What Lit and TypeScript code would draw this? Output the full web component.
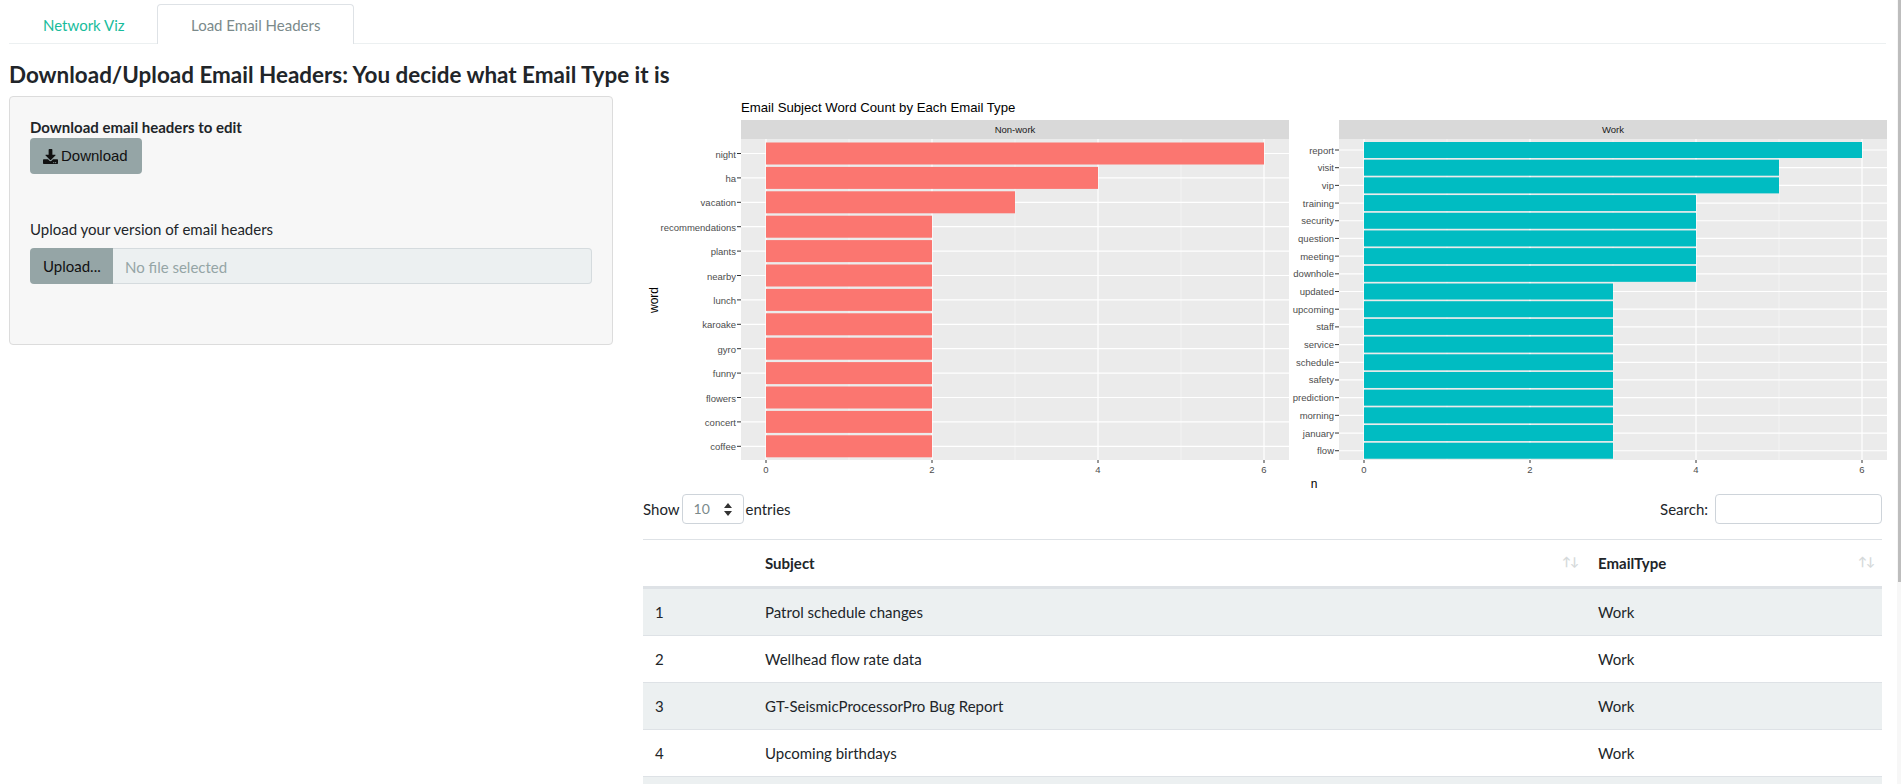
import { LitElement, html, css, svg } from 'lit';
import { customElement } from 'lit/decorators.js';

interface Facet {
  name: string;
  left: number; // panel left edge, local to the plot svg
  firstY: number;
  stepY: number;
  barH: number;
  labelDy: number;
  color: string;
  rows: [string, number][];
}

const PANEL_W = 548;
const PANEL_TOP = 43;
const PANEL_BOTTOM = 364;
const UNIT = 83;
const ZERO_OFFSET = 25;

const rowsOf = (groups: [number, string[]][]): [string, number][] =>
  groups.flatMap(([n, words]) => words.map((w) => [w, n] as [string, number]));

const FACETS: Facet[] = [
  {
    name: 'Non-work',
    left: 98,
    firstY: 57.5,
    stepY: 24.4,
    barH: 22,
    labelDy: 4,
    color: '#fb7670',
    rows: rowsOf([
      [6, ['night']],
      [4, ['ha']],
      [3, ['vacation']],
      [2, ['recommendations', 'plants', 'nearby', 'lunch', 'karoake', 'gyro', 'funny', 'flowers', 'concert', 'coffee']],
    ]),
  },
  {
    name: 'Work',
    left: 696,
    firstY: 54,
    stepY: 17.69,
    barH: 16,
    labelDy: 3.5,
    color: '#00bcc2',
    rows: rowsOf([
      [6, ['report']],
      [5, ['visit', 'vip']],
      [4, ['training', 'security', 'question', 'meeting', 'downhole']],
      [3, ['updated', 'upcoming', 'staff', 'service', 'schedule', 'safety', 'prediction', 'morning', 'january', 'flow']],
    ]),
  },
];

const TABLE_ROWS = [
  ['1', 'Patrol schedule changes', 'Work'],
  ['2', 'Wellhead flow rate data', 'Work'],
  ['3', 'GT-SeismicProcessorPro Bug Report', 'Work'],
  ['4', 'Upcoming birthdays', 'Work'],
  ['', '', ''],
];

const DOWNLOAD_ICON =
  'M216 0h80c13.3 0 24 10.7 24 24v168h87.7c17.8 0 26.7 21.5 14.1 34.1L269.7 378.3c-7.5 7.5-19.8 7.5-27.3 0L90.1 226.1c-12.6-12.6-3.7-34.1 14.1-34.1H192V24c0-13.3 10.7-24 24-24zm296 376v112c0 13.3-10.7 24-24 24H24c-13.3 0-24-10.7-24-24V376c0-13.3 10.7-24 24-24h146.7l49 49c20.1 20.1 52.5 20.1 72.6 0l49-49H488c13.3 0 24 10.7 24 24zm-124 88c0-11-9-20-20-20s-20 9-20 20 9 20 20 20 20-9 20-20zm64 0c0-11-9-20-20-20s-20 9-20 20 9 20 20 20 20-9 20-20z';

@customElement('app-root')
export class AppRoot extends LitElement {
  static styles = css`
    :host {
      display: block;
      position: relative;
      height: 784px;
      overflow: hidden;
      background: #fff;
      color: #212529;
      font-family: Lato, sans-serif;
      font-size: 15px;
      line-height: 22px;
    }
    .tabs {
      display: flex;
      margin: 0 15px 0 9px;
      padding-top: 4px;
      height: 39px;
      border-bottom: 1px solid #ecf0f1;
    }
    .tab {
      padding: 9px 33px;
      color: #18bc9c;
      border: 1px solid transparent;
      border-bottom: none;
      border-radius: 4px 4px 0 0;
      white-space: nowrap;
    }
    .tab.first {
      width: 148px;
      box-sizing: border-box;
    }
    .tab.active {
      color: #7b8a8b;
      background: #fff;
      border-color: #dee2e6;
      height: 40px;
      box-sizing: border-box;
    }
    h3 {
      margin: 16px 0 7px 9px;
      font-size: 22.45px;
      line-height: 29px;
      font-weight: 700;
    }
    .main {
      display: flex;
      align-items: flex-start;
    }
    .side {
      box-sizing: border-box;
      flex: none;
      width: 604px;
      height: 249px;
      margin: 0 30px 0 9px;
      padding: 19px 20px 0;
      background: #f7f7f7;
      border: 1px solid #dcdcdc;
      border-radius: 4px;
    }
    .strong {
      font-weight: 700;
    }
    .btn {
      display: flex;
      align-items: center;
      gap: 3px;
      box-sizing: border-box;
      width: 112px;
      height: 36px;
      padding-left: 13px;
      background: #95a5a6;
      color: #111;
      border-radius: 4px;
      font-family: 'Liberation Sans', sans-serif;
      font-size: 15px;
    }
    .btn svg {
      width: 15px;
      height: 15px;
      fill: #111;
    }
    .upload-label {
      margin: 44px 0 8px;
    }
    .file {
      display: flex;
      height: 36px;
    }
    .file-btn {
      flex: none;
      box-sizing: border-box;
      width: 83px;
      padding: 7px 0 0 13px;
      background: #95a5a6;
      color: #111;
      border-radius: 4px 0 0 4px;
    }
    .file-name {
      flex: 1;
      padding: 7px 0 0 12px;
      background: #ecf0f1;
      color: #95a5a6;
      border: 1px solid #d5dbde;
      border-left: none;
      border-radius: 0 4px 4px 0;
    }
    .content {
      flex: 1;
      min-width: 0;
    }
    .plot {
      display: block;
      width: 1258px;
      height: 398px;
    }
    .plot text {
      font-family: 'Liberation Sans', sans-serif;
    }
    .plot .tick {
      font-size: 9.5px;
      fill: #4d4d4d;
    }
    .plot .strip {
      font-size: 9.5px;
      fill: #1a1a1a;
    }
    .plot .title {
      font-size: 13.2px;
      fill: #000;
    }
    .plot .axis {
      font-size: 12px;
      fill: #000;
    }
    .controls {
      display: flex;
      justify-content: space-between;
      align-items: center;
      box-sizing: border-box;
      width: 1239px;
      height: 30px;
    }
    .length,
    .search {
      display: flex;
      align-items: center;
      gap: 2px;
    }
    .select {
      display: flex;
      align-items: center;
      justify-content: space-between;
      box-sizing: border-box;
      width: 62px;
      height: 30px;
      padding: 0 11px;
      border: 1px solid #ced4da;
      border-radius: 4px;
      color: #7b8a8b;
      font-size: 14px;
    }
    .select svg {
      width: 8px;
      height: 13px;
      fill: #333;
    }
    .search {
      gap: 7px;
    }
    .search-box {
      box-sizing: border-box;
      width: 167px;
      height: 30px;
      border: 1px solid #ced4da;
      border-radius: 4px;
    }
    table {
      table-layout: fixed;
      width: 1239px;
      margin-top: 15px;
      border-collapse: collapse;
      border-top: 1px solid #dee2e6;
    }
    .col-index {
      width: 110px;
    }
    .col-subject {
      width: 833px;
    }
    th {
      position: relative;
      height: 46px;
      padding: 0 12px;
      text-align: left;
      font-weight: 700;
      border-bottom: 3px solid #dee2e6;
    }
    td {
      height: 46px;
      padding: 0 12px;
      border-bottom: 1px solid #dee2e6;
    }
    tr.odd td {
      background: #ecf0f1;
    }
    .sort {
      position: absolute;
      right: 8px;
      top: 11px;
      color: #d5d9da;
      font-size: 12px;
      letter-spacing: -1px;
    }
    .scroll-track {
      position: absolute;
      top: 0;
      bottom: 0;
      right: 0;
      width: 4px;
      background: #f7f7f7;
    }
    .scroll-thumb {
      height: 582px;
      margin-left: 1px;
      width: 3px;
      background: #bdbdbd;
    }
  `;

  private renderFacet(f: Facet) {
    const x0 = f.left + ZERO_OFFSET;
    const right = f.left + PANEL_W;
    const ticks = [0, 2, 4, 6];
    const minors = [1, 3, 5];
    return svg`
      <rect x=${f.left} y="24" width=${PANEL_W} height="19" fill="#d9d9d9"></rect>
      <text class="strip" x=${f.left + PANEL_W / 2} y="37" text-anchor="middle">${f.name}</text>
      <rect x=${f.left} y=${PANEL_TOP} width=${PANEL_W} height=${PANEL_BOTTOM - PANEL_TOP} fill="#ebebeb"></rect>
      ${minors.map((m) => svg`
        <line x1=${x0 + m * UNIT} x2=${x0 + m * UNIT} y1=${PANEL_TOP} y2=${PANEL_BOTTOM} stroke="#f6f6f6" stroke-width="0.7"></line>
      `)}
      ${ticks.map((t) => svg`
        <line x1=${x0 + t * UNIT} x2=${x0 + t * UNIT} y1=${PANEL_TOP} y2=${PANEL_BOTTOM} stroke="#fff" stroke-width="1.2"></line>
        <line x1=${x0 + t * UNIT} x2=${x0 + t * UNIT} y1=${PANEL_BOTTOM} y2=${PANEL_BOTTOM + 3} stroke="#333"></line>
        <text class="tick" x=${x0 + t * UNIT} y=${PANEL_BOTTOM + 13} text-anchor="middle">${t}</text>
      `)}
      ${f.rows.map(([word, n], i) => {
        const cy = f.firstY + i * f.stepY;
        return svg`
          <line x1=${f.left} x2=${right} y1=${cy} y2=${cy} stroke="#fff" stroke-width="1.2"></line>
          <rect x=${x0} y=${cy - f.barH / 2} width=${n * UNIT} height=${f.barH} fill=${f.color}></rect>
          <line x1=${f.left - 4} x2=${f.left} y1=${cy} y2=${cy} stroke="#333"></line>
          <text class="tick" x=${f.left - 5} y=${cy + f.labelDy} text-anchor="end">${word}</text>
        `;
      })}
    `;
  }

  private renderPlot() {
    return html`
      <svg class="plot" viewBox="0 0 1258 398">
        <text class="title" x="98" y="16">Email Subject Word Count by Each Email Type</text>
        ${FACETS.map((f) => this.renderFacet(f))}
        <text class="axis" transform="translate(15 204) rotate(-90)" text-anchor="middle">word</text>
        <text class="axis" x="671" y="392" text-anchor="middle">n</text>
      </svg>
    `;
  }

  render() {
    return html`
      <div class="tabs">
        <div class="tab first">Network Viz</div>
        <div class="tab active">Load Email Headers</div>
      </div>
      <h3>Download/Upload Email Headers: You decide what Email Type it is</h3>
      <div class="main">
        <div class="side">
          <div class="strong">Download email headers to edit</div>
          <div class="btn">
            <svg viewBox="0 0 512 512"><path d=${DOWNLOAD_ICON}></path></svg>
            <span>Download</span>
          </div>
          <div class="upload-label">Upload your version of email headers</div>
          <div class="file">
            <div class="file-btn">Upload...</div>
            <div class="file-name">No file selected</div>
          </div>
        </div>
        <div class="content">
          ${this.renderPlot()}
          <div class="controls">
            <div class="length">
              <span>Show</span>
              <div class="select">
                <span>10</span>
                <svg viewBox="0 0 8 13"><path d="M4 0l4 5H0zM4 13L0 8h8z"></path></svg>
              </div>
              <span>entries</span>
            </div>
            <div class="search">
              <span>Search:</span>
              <div class="search-box"></div>
            </div>
          </div>
          <table>
            <colgroup>
              <col class="col-index" />
              <col class="col-subject" />
              <col />
            </colgroup>
            <thead>
              <tr>
                <th></th>
                <th>Subject<span class="sort">↑↓</span></th>
                <th>EmailType<span class="sort">↑↓</span></th>
              </tr>
            </thead>
            <tbody>
              ${TABLE_ROWS.map(
                (r, i) => html`
                  <tr class=${i % 2 === 0 ? 'odd' : ''}>
                    <td>${r[0]}</td>
                    <td>${r[1]}</td>
                    <td>${r[2]}</td>
                  </tr>
                `
              )}
            </tbody>
          </table>
        </div>
      </div>
      <div class="scroll-track"><div class="scroll-thumb"></div></div>
    `;
  }
}
